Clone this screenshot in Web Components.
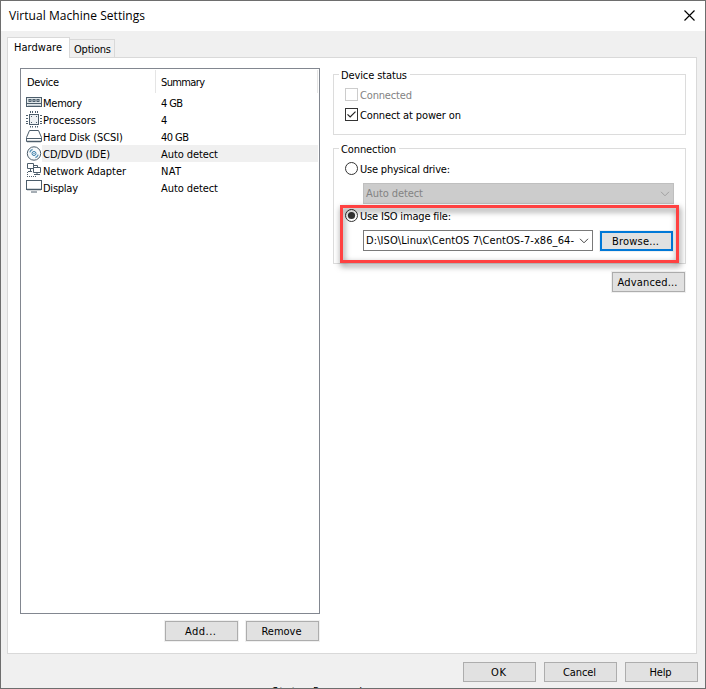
<!DOCTYPE html>
<html lang="en"><head><meta charset="utf-8"><title>Virtual Machine Settings</title>
<style>html,body{margin:0;width:706px;height:689px;overflow:hidden;background:#fff}</style></head>
<body><vm-settings></vm-settings>
<script>
const define=(name,html,init)=>{
  const t=document.createElement('template');t.innerHTML=html;
  customElements.define(name,class extends HTMLElement{
    constructor(){super();this.attachShadow({mode:'open'}).append(t.content.cloneNode(true));}
    connectedCallback(){if(init)init.call(this,this.shadowRoot);}
  });
};
/* One line of text, tracked to fill the width given in "w". */
define('fit-text',`<style>:host{display:inline-block;white-space:pre;flex:none}span{display:inline-block}</style><span><slot></slot></span>`,function(r){
  const s=r.querySelector('span'),w=+this.getAttribute('w'),n=this.textContent.length;
  const natural=s.getBoundingClientRect().width;
  if(w&&n>1){s.style.letterSpacing=((w-natural)/(n-1))+'px';this.style.width=w+'px';}
});
define('push-button',`<style>:host{display:flex;box-sizing:border-box;width:73px;height:20px;border:1px solid #adadad;background:#e1e1e1;box-shadow:0 0 0 1px #f0f0f0;align-items:center;justify-content:center;line-height:18px;padding:1px 2px 0 0;flex:none}
:host([focused]){border:2px solid #0078d7;line-height:16px}</style><slot></slot>`);
define('check-box',`<style>:host{display:flex;height:13px;gap:2px;line-height:15px;align-items:flex-start}svg{flex:none}:host([disabled]){color:#838383}</style><svg width="13" height="13"><rect x=".5" y=".5" width="12" height="12" fill="#fff"/><path d="M2.5 6.3 5.2 9 10.5 3.6" fill="none" stroke="#222" stroke-width="1.2"/></svg><slot></slot>`,function(r){
  r.querySelector('rect').setAttribute('stroke',this.hasAttribute('disabled')?'#ccc':'#333');
  if(!this.hasAttribute('checked'))r.querySelector('path').remove();
});
define('radio-button',`<style>:host{display:flex;height:13px;gap:2px;line-height:15px;align-items:flex-start}svg{flex:none}:host(:not([checked])) .dot{display:none}</style><svg width="13" height="13"><circle cx="6.5" cy="6.5" r="6" fill="#fff" stroke="#333"/><circle class="dot" cx="6.5" cy="6.5" r="3.6" fill="#333"/></svg><slot></slot>`);
define('combo-box',`<style>:host{display:flex;box-sizing:border-box;height:21px;border:1px solid #7a7a7a;background:#fff;padding:0 3px 0 2px;align-items:center;justify-content:space-between;line-height:19px;flex:none}
:host([disabled]){background:#ccc;border-color:#bfbfbf;color:#838383;line-height:20px;padding-top:1px}svg{stroke:#444;flex:none}:host([disabled]) svg{stroke:#a0a0a0}</style><slot></slot><svg width="10" height="6" fill="none"><path d="M1 .8 5 4.8 9 .8"/></svg>`);
define('group-box',`<style>:host{display:block;box-sizing:border-box;border:1px solid #dcdcdc;width:353px}.t{display:block;width:max-content;background:#fff;margin:-7px 0 0 5px;padding:1px 3px 0 2px;height:13px;line-height:14px}</style><span class="t"><slot name="title"></slot></span><slot></slot>`);
define('device-icon',`<style>:host{display:block;width:16px;height:17px;flex:none}svg{display:block;overflow:visible}</style><svg width="16" height="17" fill="none" stroke="#4c5d6b"></svg>`,function(r){
  const k={
  memory:'<rect x=".5" y="3.5" width="15" height="9" fill="#e2e8eb"/><path d="M2 6h12" stroke="#8e9ba4" stroke-width="2"/><path d="M2.5 7.5h3M6.5 7.5h3M10.5 7.5h3M3 5.5h2M7 5.5h2M11 5.5h2"/><path d="M1 9.5h14"/><path d="M2 11.5h12" stroke="#bdc6cc"/>',
  cpu:'<rect x="3.5" y="3.5" width="9" height="10" fill="#eef1f3"/><path d="M4.5 0v2M6.5 0v2M9.5 0v2M11.5 0v2M4.5 15v1.5M6.5 15v1.5M9.5 15v1.5M11.5 15v1.5M0 4.5h2M0 7.5h2M0 10.5h2M0 12.5h2M14 4.5h2M14 7.5h2M14 10.5h2M14 12.5h2"/><path d="M5 5.5h1M10 5.5h1M5 11.5h1M10 11.5h1"/>',
  disk:'<path d="M3.5 2.5h9l3 7v4H.5v-4zM.5 10.5h15"/><path d="M1 13.5h14" stroke-width="1.5"/>',
  cd:'<circle cx="8" cy="8.5" r="6.7" fill="#f6f9fb"/><circle cx="8" cy="8.5" r="2" fill="#fff" stroke="#347ba9"/><circle cx="8" cy="8.5" r=".7" fill="#347ba9" stroke="none"/><path d="M3.8 7.4A4.4 4.4 0 0 1 6.6 4.4M12.2 9.6A4.4 4.4 0 0 1 9.4 12.6" stroke="#5c94b7" stroke-width="1.3"/>',
  net:'<path d="M1.5 1.5h6v5h-6zM4.5 7v2M2 9.5h4M8 3.5h3.5V6"/><path d="M7.5 5.5h7v5h-7z" fill="#fff"/><path d="M11 11v1.5M8 12.5h6"/><path d="M1 14.5h9M1.5 10v4" stroke-dasharray="1 1"/>',
  display:'<rect x=".5" y="1.5" width="15" height="9" fill="#fff"/><path d="M1 10.5h14" stroke-width="1.5"/><path d="M5 13h6"/>'};
  r.querySelector('svg').innerHTML=k[this.getAttribute('kind')];
});
define('device-row',`<style>:host{display:flex;height:17px;line-height:19px;padding-left:5px}.n{flex:none;box-sizing:border-box;width:118px;padding-left:1px}.s{flex:1}:host([selected]) .n,:host([selected]) .s{background:#f0f0f0}.n,.s{height:17px}.s{padding-left:1px;margin-right:1px}</style><slot name="icon"></slot><span class="n"><slot name="name"></slot></span><span class="s"><slot></slot></span>`);
define('device-list',`<style>:host{display:block;box-sizing:border-box;width:300px;height:546px;border:1px solid #828790;background:#fff}
header{display:flex;height:25px;line-height:25px}header span{height:23px;margin-top:1px;box-sizing:border-box;border-right:1px solid #e5e5e5}.a{width:135px;padding-left:6px}.b{width:162px;padding-left:5px}</style>
<header><span class="a"><fit-text w="32">Device</fit-text></span><span class="b"><fit-text w="44">Summary</fit-text></span></header><slot></slot>`);
define('tab-bar',`<style>:host{display:flex;align-items:flex-end;height:21px;margin:6px 0 -1px 6px;position:relative}
div{box-sizing:border-box;border:1px solid #d9d9d9;border-bottom:0}.on{width:63px;height:21px;background:#fff;padding:3px 0 0 6px;line-height:14px}.off{width:45px;height:19px;background:#f0f0f0;border-left:0;border-bottom:1px solid #d9d9d9;padding:3px 0 0 4px;line-height:14px}</style>
<div class="on"><fit-text w="48">Hardware</fit-text></div><div class="off"><fit-text w="37">Options</fit-text></div>`);
define('title-bar',`<style>:host{display:flex;height:30px;background:#fff;justify-content:space-between;align-items:center;padding:0 10px 0 8px;font:12px/28px "Open Sans","Noto Sans",sans-serif}svg{margin-top:-2px}</style><slot></slot><svg width="11" height="11"><path d="M.5.5 10.5 10.5M10.5.5.5 10.5" stroke="#000" stroke-width="1.15"/></svg>`);
define('highlight-frame',`<style>:host{position:absolute;left:339px;top:204px;box-sizing:border-box;width:339px;height:58px;border:3px solid #ff4141;filter:drop-shadow(1px 3px 3px rgba(0,0,0,.55));pointer-events:none}</style>`);
define('vm-settings',`<style>
:host{display:block;position:relative;box-sizing:border-box;width:706px;height:689px;border:1px solid #6e6e6e;background:#f0f0f0;color:#000;font:11px/14px "DejaVu Sans Condensed","Noto Sans",sans-serif;overflow:hidden}
.panel{display:flex;box-sizing:border-box;width:690px;height:597px;margin-left:6px;background:#fff;border:1px solid #d9d9d9;padding:10px 0 0 12px;gap:13px}
.left{width:300px}.btns{display:flex;justify-content:flex-end;gap:8px;margin:7px 1px 0 0}
.right{width:353px;padding-top:6px}
.status{height:61px}.status check-box{margin-left:11px}.c1{margin-top:6px}.c2{margin-top:7px}
.conn{height:116px;margin-top:13px}.conn radio-button{margin-left:11px}
.r1{margin-top:6px}.cb1{width:311px;margin:8px 0 0 29px}.r2{margin-top:5px}.iso{display:flex;gap:7px;margin:8px 0 0 29px}.iso combo-box{width:230px}.iso push-button{margin-top:1px}
.adv{margin:8px 0 0 279px}.foot{display:flex;justify-content:flex-end;gap:8px;padding:8px 7px 0 0}.foot push-button{box-shadow:none}
.under{position:absolute;left:271px;top:684px;height:3px;overflow:hidden;line-height:13px}
.edge{position:absolute;right:-1px;top:108px;width:1px;height:580px;background:#292929}
</style>
<title-bar><fit-text w="136">Virtual Machine Settings</fit-text></title-bar>
<tab-bar></tab-bar>
<div class="panel"><div class="left"><device-list>
<device-row><device-icon slot="icon" kind="memory"></device-icon><fit-text slot="name" w="39">Memory</fit-text><fit-text w="22">4 GB</fit-text></device-row>
<device-row><device-icon slot="icon" kind="cpu"></device-icon><fit-text slot="name" w="53">Processors</fit-text><fit-text>4</fit-text></device-row>
<device-row><device-icon slot="icon" kind="disk"></device-icon><fit-text slot="name" w="80">Hard Disk (SCSI)</fit-text><fit-text w="28">40 GB</fit-text></device-row>
<device-row selected><device-icon slot="icon" kind="cd"></device-icon><fit-text slot="name" w="67">CD/DVD (IDE)</fit-text><fit-text w="57">Auto detect</fit-text></device-row>
<device-row><device-icon slot="icon" kind="net"></device-icon><fit-text slot="name" w="83">Network Adapter</fit-text><fit-text w="20">NAT</fit-text></device-row>
<device-row><device-icon slot="icon" kind="display"></device-icon><fit-text slot="name" w="35">Display</fit-text><fit-text w="57">Auto detect</fit-text></device-row>
</device-list><div class="btns"><push-button><fit-text w="31">Add...</fit-text></push-button><push-button><fit-text w="40">Remove</fit-text></push-button></div></div>
<div class="right"><group-box class="status"><fit-text slot="title" w="66">Device status</fit-text>
<check-box class="c1" disabled><fit-text w="52">Connected</fit-text></check-box><check-box class="c2" checked><fit-text w="101">Connect at power on</fit-text></check-box></group-box>
<group-box class="conn"><fit-text slot="title" w="55">Connection</fit-text>
<radio-button class="r1"><fit-text w="90">Use physical drive:</fit-text></radio-button><combo-box class="cb1" disabled><fit-text w="57">Auto detect</fit-text></combo-box>
<radio-button class="r2" checked><fit-text w="91">Use ISO image file:</fit-text></radio-button>
<div class="iso"><combo-box><fit-text w="208">D:\\ISO\\Linux\\CentOS 7\\CentOS-7-x86_64-</fit-text></combo-box><push-button focused><fit-text w="47">Browse...</fit-text></push-button></div></group-box>
<push-button class="adv"><fit-text w="60">Advanced...</fit-text></push-button></div></div>
<div class="foot"><push-button><fit-text w="15">OK</fit-text></push-button><push-button><fit-text w="33">Cancel</fit-text></push-button><push-button><fit-text w="22">Help</fit-text></push-button></div>
<div class="under"><fit-text w="109">State: Powered on</fit-text></div><div class="edge"></div><highlight-frame></highlight-frame>`);
</script></body></html>
